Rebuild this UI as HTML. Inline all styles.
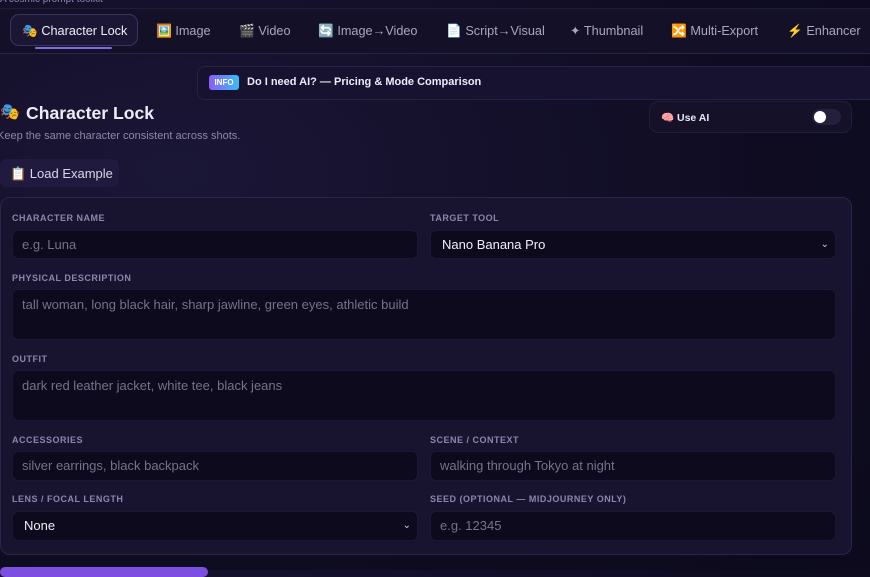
<!DOCTYPE html>
<html><head><style>
*{box-sizing:border-box;margin:0;padding:0}
body{width:870px;height:570px;overflow:hidden;background:radial-gradient(ellipse at 20% 30%,#1b1636 0%,#0f0c22 60%,#0c0a1c 100%);font-family:"Liberation Sans","Noto Sans CJK JP",sans-serif;color:#e8e6f5;position:relative}
.a{position:absolute}
.top{left:0;top:-6px;font-size:10px;color:#8c88a8}
.nav{left:0;top:8px;width:870px;height:46px;background:#131027;border-top:1px solid #211c3d;border-bottom:1px solid #2a2448}
.tab{position:absolute;top:23px;font-size:12.7px;color:#a9a6c2;white-space:nowrap;line-height:16px}
.act{left:10px;top:14px;width:128px;height:32px;border:1px solid #3a3460;border-radius:9px;background:#1a1634}
.ul{left:35px;top:47px;width:77px;height:2px;background:#7a6ee0;border-radius:1px}
.info{left:197px;top:66px;width:680px;height:34px;background:#161230;border:1px solid #282244;border-radius:8px}
.badge{left:209px;top:75px;width:30px;height:15px;border-radius:3px;background:linear-gradient(90deg,#8b5cf6,#38bdf8);font-size:8px;font-weight:bold;color:#fff;text-align:center;line-height:15px}
h1{position:absolute;left:26px;top:103px;font-size:17.6px;font-weight:bold;color:#ececf8}
.card{left:0;top:197px;width:852px;height:358px;background:#18142f;border:1px solid #2b2548;border-radius:10px}
.lb{position:absolute;font-size:9px;font-weight:bold;letter-spacing:.5px;color:#8a86ad}
.in{position:absolute;background:#0c0a1c;border:1px solid #1c1833;border-radius:6px;font-size:13px;color:#75728c;padding-left:9px}
.sel{color:#f0eef8;padding-left:11px}
.chev{position:absolute;right:6px;top:0;font-size:10px;color:#ccc}
</style></head><body>
<div class="a top">A cosmic prompt toolkit</div>
<div class="a nav"></div>
<div class="a act"></div>
<div class="a ul"></div>
<div class="tab" style="left:22px;color:#f0eef8">🎭 Character Lock</div>
<div class="tab" style="left:156px">🖼️ Image</div>
<div class="tab" style="left:239px">🎬 Video</div>
<div class="tab" style="left:318px">🔄 Image→Video</div>
<div class="tab" style="left:446px">📄 Script→Visual</div>
<div class="tab" style="left:570px">✦ Thumbnail</div>
<div class="tab" style="left:671px">🔀 Multi-Export</div>
<div class="tab" style="left:787px">⚡ Enhancer</div>
<div class="a info"></div>
<div class="a badge">INFO</div>
<div class="a" style="left:247px;top:76px;font-size:11px;font-weight:bold;color:#ececf8">Do I need AI? — Pricing &amp; Mode Comparison</div>
<div class="a" style="left:0;top:102px;font-size:16px">🎭</div>
<h1>Character Lock</h1>
<div class="a" style="left:-3px;top:130px;font-size:11px;color:#8c88a8">Keep the same character consistent across shots.</div>
<div class="a" style="left:649px;top:101px;width:203px;height:32px;background:#151129;border:1px solid #221d3b;border-radius:9px"></div>
<div class="a" style="left:661px;top:111px;font-size:10.5px;font-weight:bold;color:#e8e6f5">🧠 Use AI</div>
<div class="a" style="left:812px;top:109px;width:29px;height:16px;border-radius:8px;background:#24203c"></div>
<div class="a" style="left:814px;top:111px;width:12px;height:12px;border-radius:6px;background:#fff"></div>
<div class="a" style="left:0;top:159px;width:119px;height:28px;background:#201b3e;border-radius:7px"></div>
<div class="a" style="left:10px;top:166px;font-size:13px;color:#d8d5ee">📋 Load Example</div>
<div class="a card"></div>
<div class="lb" style="left:12px;top:213px">CHARACTER NAME</div>
<div class="lb" style="left:430px;top:213px">TARGET TOOL</div>
<div class="in" style="left:12px;top:230px;width:406px;height:29px;line-height:27px">e.g. Luna</div>
<div class="in sel" style="left:430px;top:230px;width:406px;height:29px;line-height:27px">Nano Banana Pro<span class="chev">⌄</span></div>
<div class="lb" style="left:12px;top:273px">PHYSICAL DESCRIPTION</div>
<div class="in" style="left:12px;top:289px;width:824px;height:51px;padding-top:7px">tall woman, long black hair, sharp jawline, green eyes, athletic build</div>
<div class="lb" style="left:12px;top:354px">OUTFIT</div>
<div class="in" style="left:12px;top:370px;width:824px;height:51px;padding-top:7px">dark red leather jacket, white tee, black jeans</div>
<div class="lb" style="left:12px;top:435px">ACCESSORIES</div>
<div class="lb" style="left:430px;top:435px">SCENE / CONTEXT</div>
<div class="in" style="left:12px;top:451px;width:406px;height:30px;line-height:28px">silver earrings, black backpack</div>
<div class="in" style="left:430px;top:451px;width:406px;height:30px;line-height:28px">walking through Tokyo at night</div>
<div class="lb" style="left:12px;top:494px">LENS / FOCAL LENGTH</div>
<div class="lb" style="left:430px;top:494px">SEED (OPTIONAL — MIDJOURNEY ONLY)</div>
<div class="in sel" style="left:12px;top:511px;width:406px;height:30px;line-height:28px">None<span class="chev">⌄</span></div>
<div class="in" style="left:430px;top:511px;width:406px;height:30px;line-height:28px">e.g. 12345</div>
<div class="a" style="left:0;top:567px;width:208px;height:10px;border-radius:6px;background:#7c4fe0"></div>
</body></html>
